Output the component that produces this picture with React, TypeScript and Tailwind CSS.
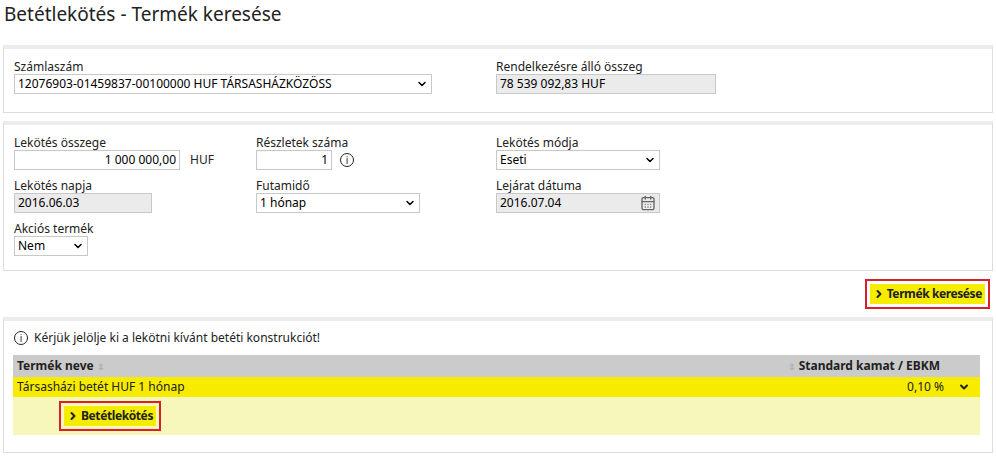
import { ChevronDown, ChevronRight, CalendarDays } from "lucide-react"

const arial = "font-[family-name:'Liberation_Sans',Arial,sans-serif]"
const lbl = "block text-[12px] leading-[15px] text-[#222]"
const inp = `h-[20px] border border-[#c8c8c8] px-[3px] text-[12px] ${arial} text-black flex items-center`

function Select({ value, w }: { value: string; w: string }) {
  return (
    <div className={`${inp} ${w} justify-between bg-white`}>
      <span>{value}</span>
      <ChevronDown className="h-3 w-3" strokeWidth={3} />
    </div>
  )
}

function Info() {
  return (
    <span className="inline-flex h-[14px] w-[14px] items-center justify-center rounded-full border border-[#222] text-[10px] font-[family-name:'Liberation_Serif',serif] leading-none">i</span>
  )
}

function Panel({ children, className = "" }: { children: React.ReactNode; className?: string }) {
  return (
    <div className={`mx-[3px] border border-[#dcdcdc] border-t-[4px] border-t-[#ececec] bg-white ${className}`}>{children}</div>
  )
}

function YellowBtn({ text }: { text: string }) {
  return (
    <div className="border-2 border-[#d9202a] p-[3px]">
      <div className={`flex h-[20px] items-center gap-[2px] bg-[#f5ec00] px-[3px] text-[12px] font-bold tracking-[-0.4px] ${arial}`}>
        <ChevronRight className="h-3 w-3" strokeWidth={4} />
        {text}
      </div>
    </div>
  )
}

export default function App() {
  return (
    <div className="h-[461px] w-[996px] bg-white font-[family-name:'DejaVu_Sans',Verdana,sans-serif] text-[#222]">
      <h1 className="px-[4px] pt-[0px] pb-[17px] text-[19px] leading-[28px] text-[#222]">Betétlekötés - Termék keresése</h1>

      <Panel className="h-[68px]">
        <div className="flex pl-[10px] pt-[10px]">
          <div className="w-[482px]">
            <span className={lbl}>Számlaszám</span>
            <Select value="12076903-01459837-00100000 HUF TÁRSASHÁZKÖZÖSS" w="w-[418px]" />
          </div>
          <div>
            <span className={lbl}>Rendelkezésre álló összeg</span>
            <div className={`${inp} w-[220px] bg-[#ebebeb] text-[#777]`}>78 539 092,83 HUF</div>
          </div>
        </div>
      </Panel>

      <Panel className="mt-[8px] h-[150px]">
        <div className="grid grid-cols-[242px_240px_1fr] gap-y-[8px] pl-[10px] pt-[10px]">
          <div>
            <span className={lbl}>Lekötés összege</span>
            <div className="flex items-center gap-[10px]">
              <div className={`${inp} w-[166px] justify-end bg-white`}>1 000 000,00</div>
              <span className={`text-[12px] ${arial}`}>HUF</span>
            </div>
          </div>
          <div>
            <span className={lbl}>Részletek száma</span>
            <div className="flex items-center gap-[8px]">
              <div className={`${inp} w-[76px] justify-end bg-white`}>1</div>
              <Info />
            </div>
          </div>
          <div>
            <span className={lbl}>Lekötés módja</span>
            <Select value="Eseti" w="w-[164px]" />
          </div>
          <div>
            <span className={lbl}>Lekötés napja</span>
            <div className={`${inp} w-[138px] bg-[#ebebeb] text-[#888]`}>2016.06.03</div>
          </div>
          <div>
            <span className={lbl}>Futamidő</span>
            <Select value="1 hónap" w="w-[164px]" />
          </div>
          <div>
            <span className={lbl}>Lejárat dátuma</span>
            <div className={`${inp} w-[164px] justify-between bg-[#ebebeb] text-[#888]`}>
              <span>2016.07.04</span>
              <CalendarDays className="h-4 w-4 text-[#666]" />
            </div>
          </div>
          <div>
            <span className={lbl}>Akciós termék</span>
            <Select value="Nem" w="w-[74px]" />
          </div>
        </div>
      </Panel>

      <div className="flex justify-end px-[6px] py-[8px]">
        <YellowBtn text="Termék keresése" />
      </div>

      <Panel className="h-[136px] border-t-[2px]">
        <div className="flex items-center gap-[6px] pl-[10px] pt-[8px] text-[12px]">
          <Info />
          <span>Kérjük jelölje ki a lekötni kívánt betéti konstrukciót!</span>
        </div>
        <div className="mx-[9px] mt-[8px] mr-[12px]">
          <div className="flex h-[22px] items-center justify-between bg-[#cbcbcb] px-[4px] text-[12px] font-bold">
            <span>Termék neve <span className="font-normal text-[#999] text-[9px]">⇳</span></span>
            <span className="pr-[36px]"><span className="font-normal text-[#999] text-[9px]">⇳</span> Standard kamat / EBKM</span>
          </div>
          <div className="flex h-[20px] items-center justify-between bg-[#f7ec00] px-[4px] text-[12px]">
            <span>Társasházi betét HUF 1 hónap</span>
            <span className="flex items-center gap-[14px] pr-[6px]">0,10 %<ChevronDown className="h-3 w-3" strokeWidth={4} /></span>
          </div>
          <div className="flex h-[38px] items-center bg-[#f8f7bb] pl-[46px]">
            <YellowBtn text="Betétlekötés" />
          </div>
        </div>
      </Panel>
    </div>
  )
}
